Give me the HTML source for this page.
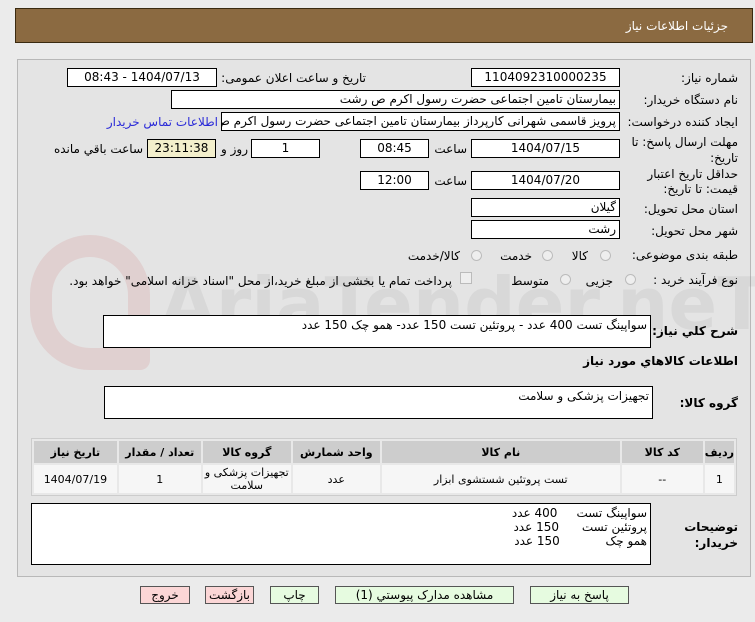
<!DOCTYPE html>
<html><head><meta charset="utf-8"><style>
*{box-sizing:border-box;margin:0;padding:0}
body{width:755px;height:622px;background:#ebebeb;font-family:"DejaVu Sans","Liberation Sans",sans-serif;font-size:12px;color:#000;position:relative;overflow:hidden;direction:rtl}
.a{position:absolute;white-space:nowrap}
.hdr{left:15px;top:8px;width:738px;height:35px;background:#8b6a41;border:1px solid #3a2a10}
.panel{left:17px;top:59px;width:734px;height:518px;border:1px solid #b8b8b8;background:#e4e4e4}
.box{position:absolute;background:#fff;border:1px solid #000;height:19px;line-height:17px;text-align:center;font-size:12px;overflow:hidden;white-space:nowrap}
.r{text-align:right;padding-right:3px}
.lbl{position:absolute;white-space:nowrap;font-size:12px}
.rad{position:absolute;width:11px;height:11px;border-radius:50%;border:1px solid #bbb;background:#eee}
.ta{position:absolute;background:#fff;border:1px solid #000;text-align:right;padding:2px 3px;font-size:12px}
table{border-collapse:separate;border-spacing:2px;position:absolute;left:31px;top:438px;width:706px;background:#e8e8e8;border:1px solid #ccc}
th{background:#cdcdcd;height:22px;font-size:11px;font-weight:bold}
td{background:#f6f6f6;height:28px;text-align:center;font-size:11px}
.btn{position:absolute;top:586px;height:18px;border:1px solid #555;text-align:center;line-height:16px;font-size:12px}
.g{background:#e6fbe0}.p{background:#fbd6d6}
</style></head><body>
<div class="a hdr"></div>
<div class="a" style="right:27px;top:19px;color:#fff;font-size:12px">جزئیات اطلاعات نیاز</div>
<div class="a panel"></div>
<div class="a" style="left:30px;top:235px;width:120px;height:135px;border:22px solid rgba(200,80,80,.13);border-radius:60px 60px 10px 60px"></div>
<div class="a" style="left:160px;top:262px;font-size:72px;font-weight:bold;color:rgba(120,120,120,.10);direction:ltr">AriaTender.neT</div>

<div class="lbl" style="right:17px;top:71px">شماره نیاز:</div>
<div class="box" style="left:471px;top:68px;width:149px">1104092310000235</div>
<div class="lbl" style="right:389px;top:71px">تاریخ و ساعت اعلان عمومی:</div>
<div class="box" style="left:67px;top:68px;width:150px">1404/07/13 - 08:43</div>

<div class="lbl" style="right:17px;top:93px">نام دستگاه خریدار:</div>
<div class="box r" style="left:171px;top:90px;width:449px">بیمارستان  تامین اجتماعی حضرت رسول اکرم ص رشت</div>

<div class="lbl" style="right:17px;top:115px">ایجاد کننده درخواست:</div>
<div class="box r" style="left:221px;top:112px;width:399px">پرویز قاسمی شهرانی کارپرداز بیمارستان  تامین اجتماعی حضرت رسول اکرم ص</div>
<div class="lbl" style="right:537px;top:115px;color:#2a2ad8">اطلاعات تماس خریدار</div>

<div class="lbl" style="right:17px;top:135px">مهلت ارسال پاسخ: تا</div>
<div class="lbl" style="right:17px;top:151px">تاریخ:</div>
<div class="box" style="left:471px;top:139px;width:149px">1404/07/15</div>
<div class="lbl" style="right:288px;top:142px">ساعت</div>
<div class="box" style="left:360px;top:139px;width:69px">08:45</div>
<div class="box" style="left:251px;top:139px;width:69px">1</div>
<div class="lbl" style="right:507px;top:142px">روز و</div>
<div class="box" style="left:147px;top:139px;width:69px;background:#f3efcc">23:11:38</div>
<div class="lbl" style="right:612px;top:142px">ساعت باقي مانده</div>

<div class="lbl" style="right:17px;top:167px">حداقل تاریخ اعتبار</div>
<div class="lbl" style="right:17px;top:182px">قیمت: تا تاریخ:</div>
<div class="box" style="left:471px;top:171px;width:149px">1404/07/20</div>
<div class="lbl" style="right:288px;top:174px">ساعت</div>
<div class="box" style="left:360px;top:171px;width:69px">12:00</div>

<div class="lbl" style="right:17px;top:202px">استان محل تحویل:</div>
<div class="box r" style="left:471px;top:198px;width:149px">گیلان</div>
<div class="lbl" style="right:17px;top:224px">شهر محل تحویل:</div>
<div class="box r" style="left:471px;top:220px;width:149px">رشت</div>

<div class="lbl" style="right:17px;top:248px">طبقه بندی موضوعی:</div>
<div class="rad" style="left:600px;top:250px"></div><div class="lbl" style="right:167px;top:249px">کالا</div>
<div class="rad" style="left:542px;top:250px"></div><div class="lbl" style="right:223px;top:249px">خدمت</div>
<div class="rad" style="left:471px;top:250px"></div><div class="lbl" style="right:295px;top:249px">کالا/خدمت</div>

<div class="lbl" style="right:17px;top:273px">نوع فرآیند خرید :</div>
<div class="rad" style="left:625px;top:274px"></div><div class="lbl" style="right:142px;top:274px">جزیی</div>
<div class="rad" style="left:560px;top:274px"></div><div class="lbl" style="right:206px;top:274px">متوسط</div>
<div class="a" style="left:460px;top:272px;width:12px;height:12px;border:1px solid #bbb;background:#eee"></div>
<div class="lbl" style="right:303px;top:274px">پرداخت تمام یا بخشی از مبلغ خرید،از محل "اسناد خزانه اسلامی" خواهد بود.</div>

<div class="lbl" style="right:17px;top:324px;font-weight:bold">شرح کلي نياز:</div>
<div class="ta" style="left:103px;top:315px;width:548px;height:33px">سواپینگ تست 400 عدد - پروتئین تست 150 عدد- همو چک 150 عدد</div>
<div class="lbl" style="right:17px;top:354px;font-weight:bold">اطلاعات کالاهاي مورد نياز</div>
<div class="lbl" style="right:17px;top:396px;font-weight:bold">گروه کالا:</div>
<div class="ta" style="left:104px;top:386px;width:549px;height:33px">تجهیزات پزشکی و سلامت</div>

<table><tr><th style="width:27px">رديف</th><th style="width:81px">کد کالا</th><th style="width:238px">نام کالا</th><th style="width:87px">واحد شمارش</th><th style="width:88px">گروه کالا</th><th style="width:82px">تعداد / مقدار</th><th>تاريخ نياز</th></tr>
<tr><td>1</td><td>--</td><td>تست پروتئین شستشوی ابزار</td><td>عدد</td><td style="line-height:13px">تجهیزات پزشکی و سلامت</td><td>1</td><td>1404/07/19</td></tr></table>

<div class="lbl" style="right:17px;top:520px;font-weight:bold">توضیحات</div>
<div class="lbl" style="right:17px;top:536px;font-weight:bold">خریدار:</div>
<div class="ta" style="left:31px;top:503px;width:620px;height:62px;line-height:14px;white-space:pre">سواپینگ تست     400 عدد
پروتئین تست      150 عدد
همو چک            150 عدد</div>

<div class="btn g" style="left:530px;width:99px">پاسخ به نیاز</div>
<div class="btn g" style="left:335px;width:179px">مشاهده مدارک پیوستي (1)</div>
<div class="btn g" style="left:270px;width:49px">چاپ</div>
<div class="btn p" style="left:205px;width:49px">بازگشت</div>
<div class="btn p" style="left:140px;width:50px">خروج</div>
</body></html>
